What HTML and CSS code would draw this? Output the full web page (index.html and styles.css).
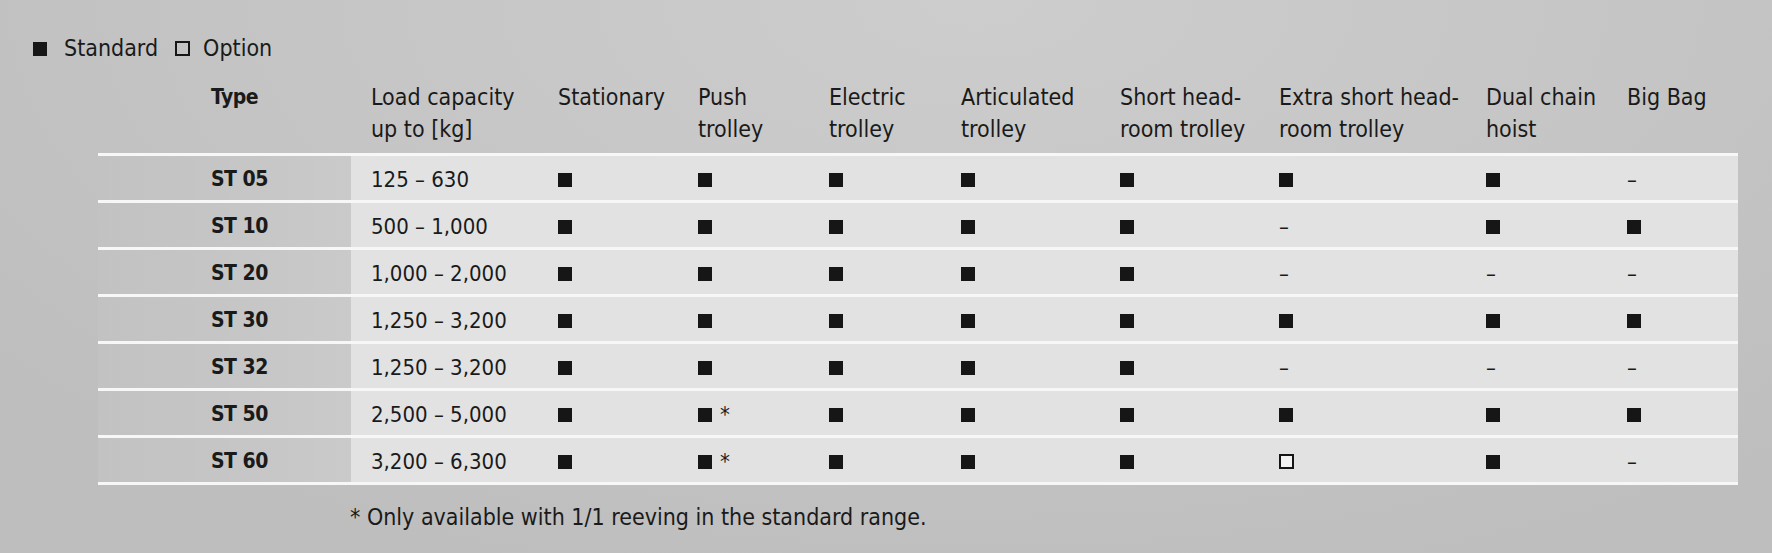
FILE: index.html
```html
<!DOCTYPE html>
<html lang="en">
<head>
<meta charset="utf-8">
<title>ST chain hoist variants</title>
<link rel="stylesheet" href="styles.css">
</head>
<body>
<div class="page">
  <div class="legend">
    <span class="sq"></span><span class="legend-label">Standard</span>
    <span class="sq open legend-open"></span><span class="legend-label opt">Option</span>
  </div>

  <div class="table">
    <div class="row head">
      <div class="cell type">Type</div>
      <div class="cell">Load capacity<br>up to [kg]</div>
      <div class="cell">Stationary</div>
      <div class="cell">Push<br>trolley</div>
      <div class="cell">Electric<br>trolley</div>
      <div class="cell">Articulated<br>trolley</div>
      <div class="cell">Short head-<br>room trolley</div>
      <div class="cell">Extra short head-<br>room trolley</div>
      <div class="cell">Dual chain<br>hoist</div>
      <div class="cell">Big Bag</div>
    </div>

    <div class="row data">
      <div class="cell type">ST 05</div>
      <div class="cell">125 – 630</div>
      <div class="cell"><span class="sq"></span></div>
      <div class="cell"><span class="sq"></span></div>
      <div class="cell"><span class="sq"></span></div>
      <div class="cell"><span class="sq"></span></div>
      <div class="cell"><span class="sq"></span></div>
      <div class="cell"><span class="sq"></span></div>
      <div class="cell"><span class="sq"></span></div>
      <div class="cell">–</div>
    </div>

    <div class="row data">
      <div class="cell type">ST 10</div>
      <div class="cell">500 – 1,000</div>
      <div class="cell"><span class="sq"></span></div>
      <div class="cell"><span class="sq"></span></div>
      <div class="cell"><span class="sq"></span></div>
      <div class="cell"><span class="sq"></span></div>
      <div class="cell"><span class="sq"></span></div>
      <div class="cell">–</div>
      <div class="cell"><span class="sq"></span></div>
      <div class="cell"><span class="sq"></span></div>
    </div>

    <div class="row data">
      <div class="cell type">ST 20</div>
      <div class="cell">1,000 – 2,000</div>
      <div class="cell"><span class="sq"></span></div>
      <div class="cell"><span class="sq"></span></div>
      <div class="cell"><span class="sq"></span></div>
      <div class="cell"><span class="sq"></span></div>
      <div class="cell"><span class="sq"></span></div>
      <div class="cell">–</div>
      <div class="cell">–</div>
      <div class="cell">–</div>
    </div>

    <div class="row data">
      <div class="cell type">ST 30</div>
      <div class="cell">1,250 – 3,200</div>
      <div class="cell"><span class="sq"></span></div>
      <div class="cell"><span class="sq"></span></div>
      <div class="cell"><span class="sq"></span></div>
      <div class="cell"><span class="sq"></span></div>
      <div class="cell"><span class="sq"></span></div>
      <div class="cell"><span class="sq"></span></div>
      <div class="cell"><span class="sq"></span></div>
      <div class="cell"><span class="sq"></span></div>
    </div>

    <div class="row data">
      <div class="cell type">ST 32</div>
      <div class="cell">1,250 – 3,200</div>
      <div class="cell"><span class="sq"></span></div>
      <div class="cell"><span class="sq"></span></div>
      <div class="cell"><span class="sq"></span></div>
      <div class="cell"><span class="sq"></span></div>
      <div class="cell"><span class="sq"></span></div>
      <div class="cell">–</div>
      <div class="cell">–</div>
      <div class="cell">–</div>
    </div>

    <div class="row data">
      <div class="cell type">ST 50</div>
      <div class="cell">2,500 – 5,000</div>
      <div class="cell"><span class="sq"></span></div>
      <div class="cell"><span class="sq"></span><span class="star">*</span></div>
      <div class="cell"><span class="sq"></span></div>
      <div class="cell"><span class="sq"></span></div>
      <div class="cell"><span class="sq"></span></div>
      <div class="cell"><span class="sq"></span></div>
      <div class="cell"><span class="sq"></span></div>
      <div class="cell"><span class="sq"></span></div>
    </div>

    <div class="row data last">
      <div class="cell type">ST 60</div>
      <div class="cell">3,200 – 6,300</div>
      <div class="cell"><span class="sq"></span></div>
      <div class="cell"><span class="sq"></span><span class="star">*</span></div>
      <div class="cell"><span class="sq"></span></div>
      <div class="cell"><span class="sq"></span></div>
      <div class="cell"><span class="sq"></span></div>
      <div class="cell"><span class="sq open"></span></div>
      <div class="cell"><span class="sq"></span></div>
      <div class="cell">–</div>
    </div>
  </div>

  <p class="footnote">* Only available with 1/1 reeving in the standard range.</p>
</div>
</body>
</html>
```

FILE: styles.css
```css
html, body {
  margin: 0;
  padding: 0;
}

body {
  width: 1772px;
  height: 553px;
  overflow: hidden;
  background: radial-gradient(ellipse 70% 110% at 55% 0%, #cdcdcd 0%, #c5c5c5 55%, #bebebe 100%);
  font-family: "DejaVu Sans Condensed", "Liberation Sans", sans-serif;
  font-size: 23px;
  color: #1a1a1a;
}

.page {
  padding-top: 32px;
}

/* legend */
.legend {
  display: flex;
  align-items: baseline;
  margin-left: 33px;
  line-height: 32px;
}

.legend-label {
  margin-left: 17px;
}

.legend-label.opt {
  margin-left: 13px;
}

.legend-open {
  margin-left: 17px;
}

/* marker squares */
.sq {
  display: inline-block;
  width: 14px;
  height: 14px;
  background: #161616;
  vertical-align: baseline;
}

.sq.open {
  box-sizing: border-box;
  width: 15px;
  height: 15px;
  background: #f3f3f3;
  border: 2px solid #161616;
}

.sq.open.legend-open {
  background: transparent;
}

.star {
  margin-left: 8px;
}

/* table */
.table {
  margin-top: 17px;
  margin-left: 98px;
  width: 1640px;
}

.row {
  display: grid;
  grid-template-columns: 253px 187px 140px 131px 132px 159px 159px 207px 141px 131px;
}

.cell {
  padding-left: 20px;
  white-space: nowrap;
}

.cell.type {
  padding-left: 113px;
  font-weight: bold;
  font-size: 21px;
  letter-spacing: -0.5px;
}

.head .cell {
  line-height: 32px;
  padding-bottom: 8px;
}

.data {
  border-top: 3px solid #f7f7f7;
}

.data.last {
  border-bottom: 3px solid #f7f7f7;
}

.data .cell {
  height: 41px;
  padding-top: 3px;
  line-height: 41px;
  font-size: 22px;
  background: #e2e2e2;
}

.data .cell.type {
  font-size: 21px;
  background: linear-gradient(90deg, #c2c2c2 0%, #c6c6c6 60%, #cacaca 100%);
}

/* footnote */
.footnote {
  margin: 16px 0 0 350px;
  line-height: 32px;
}
```
